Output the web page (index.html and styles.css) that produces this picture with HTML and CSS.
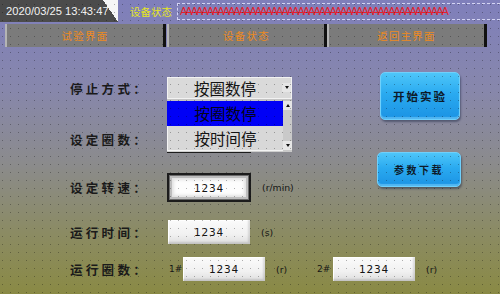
FILE: index.html
```html
<!DOCTYPE html>
<html lang="zh">
<head>
<meta charset="utf-8">
<title>试验界面</title>
<link rel="stylesheet" href="styles.css">
</head>
<body>
<div class="screen">
  <header class="topbar">
    <div class="clock">2020/03/25 13:43:47</div>
    <div class="status">设备状态</div>
    <div class="marquee"><span class="marquee-text">AAAAAAAAAAAAAAAAAAAAAAAAAAAAAAAAAAAAAAAAAAAAAAAAAA</span></div>
  </header>
  <nav class="tabs">
    <div class="tab tab-1">试验界面</div>
    <div class="tab tab-2">设备状态</div>
    <div class="tab tab-3">返回主界面</div>
  </nav>
  <main class="panel">
    <div class="upper">
      <div class="form">
        <div class="row row-1">
          <span class="label">停止方式：</span>
          <div class="select">
            <span class="select-value">按圈数停</span>
            <span class="arrow-btn"><span class="tri-down"></span></span>
            <div class="list">
              <div class="list-items">
                <div class="item item-active">按圈数停</div>
                <div class="item">按时间停</div>
              </div>
              <div class="scrollbar">
                <span class="arrow-btn"><span class="tri-up"></span></span>
                <span class="track"></span>
                <span class="arrow-btn"><span class="tri-down"></span></span>
              </div>
            </div>
          </div>
        </div>
        <div class="row row-2">
          <span class="label">设定圈数：</span>
          <div class="field field-dark field-laps"></div>
        </div>
        <div class="row row-3">
          <span class="label">设定转速：</span>
          <div class="field field-dark field-speed">1234</div>
          <span class="unit">(r/min)</span>
        </div>
        <div class="row row-4">
          <span class="label">运行时间：</span>
          <div class="field field-light field-time">1234</div>
          <span class="unit">(s)</span>
        </div>
      </div>
      <div class="actions">
        <button class="btn btn-start">开始实验</button>
        <button class="btn btn-load">参数下载</button>
      </div>
    </div>
    <div class="row row-5">
      <span class="label">运行圈数：</span>
      <span class="tag tag-1">1#</span>
      <div class="field field-light">1234</div>
      <span class="unit">(r)</span>
      <span class="tag tag-2">2#</span>
      <div class="field field-light">1234</div>
      <span class="unit">(r)</span>
    </div>
  </main>
  <svg class="grid" width="500" height="294" aria-hidden="true">
    <defs>
      <pattern id="dots" x="2" y="4" width="8" height="8" patternUnits="userSpaceOnUse">
        <rect x="0" y="0" width="1" height="1" fill="#000" fill-opacity="0.3"/>
      </pattern>
    </defs>
    <rect width="500" height="294" fill="url(#dots)"/>
  </svg>
</div>
</body>
</html>
```

FILE: styles.css
```css
* { box-sizing: border-box; }

html, body {
  margin: 0;
  padding: 0;
}

body {
  width: 500px;
  height: 294px;
  overflow: hidden;
  font-family: "Noto Sans CJK SC", "Noto Sans", sans-serif;
}

.screen {
  position: relative;
  width: 500px;
  height: 294px;
  overflow: hidden;
  background: linear-gradient(to bottom, #7f7fbb 0%, #8787ac 30%, #8b8b8d 55%, #8b8b62 80%, #8a8a45 100%);
}

/* top bar */
.topbar {
  display: flex;
  align-items: center;
  height: 22px;
}

.clock {
  width: 118px;
  height: 22px;
  flex: none;
  padding-left: 6px;
  line-height: 22px;
  font-family: "Liberation Sans", Arial, sans-serif;
  font-size: 11.2px;
  color: #f2f2f2;
  white-space: nowrap;
  background:
    linear-gradient(to top right, #4b4b4b 50%, #f6f6f6 50%) right top / 15px 100% no-repeat,
    #4b4b4b;
}

.status {
  margin-left: 12px;
  font-size: 10.5px;
  color: #e6e61e;
  white-space: nowrap;
}

.marquee {
  flex: 1;
  height: 17px;
  margin-left: 5px;
  margin-top: 1px;
  padding-left: 2px;
  border-top: 1px dashed #d4d4f4;
  border-bottom: 1px dashed #d4d4f4;
  border-left: 1px dashed #d4d4f4;
  overflow: hidden;
  display: flex;
  align-items: center;
}

.marquee-text {
  font-family: "Liberation Sans", Arial, sans-serif;
  font-size: 11px;
  letter-spacing: -2px;
  color: #e4202c;
  white-space: nowrap;
  line-height: 1;
}

/* tabs */
.tabs {
  display: flex;
  margin-top: 2px;
  padding-left: 5px;
  height: 23px;
}

.tab {
  height: 23px;
  background: #7b7b7b;
  border-left: 2px solid #b4b4b4;
  border-right: 3px solid #111;
  color: #ee8a1e;
  font-size: 10.5px;
  letter-spacing: 1.2px;
  display: flex;
  align-items: center;
  justify-content: center;
}

.tab-1 { width: 161px; margin-right: 1px; }
.tab-2 { width: 160px; }
.tab-3 { width: 160px; }

/* main panel */
.panel {
  display: flex;
  flex-direction: column;
}

.upper {
  display: flex;
}

.form {
  width: 377px;
  flex: none;
  padding-left: 70px;
  padding-top: 30px;
  display: flex;
  flex-direction: column;
}

.row {
  display: flex;
  align-items: center;
}

.row-1 { height: 22px; position: relative; z-index: 2; }
.row-2 { height: 29px; margin-top: 26px; }
.row-3 { height: 29px; margin-top: 19px; }
.row-4 { height: 24px; margin-top: 18px; }
.row-5 { height: 24px; margin-top: 13px; padding-left: 70px; }

.label {
  width: 97px;
  flex: none;
  font-size: 12.5px;
  font-weight: 700;
  letter-spacing: 3.3px;
  color: #1a1a1a;
  white-space: nowrap;
}

/* dropdown */
.select {
  position: relative;
  width: 125px;
  height: 22px;
  display: flex;
  background: #dadada;
  border: 1px solid #f2f2f2;
}

.select-value {
  flex: 1;
  text-align: center;
  font-size: 15.5px;
  line-height: 20px;
  color: #141414;
}

.arrow-btn {
  width: 9px;
  height: 9px;
  flex: none;
  background: #e6e6e6;
  display: flex;
  align-items: center;
  justify-content: center;
}

.select > .arrow-btn {
  margin-top: 5px;
}

.tri-down, .tri-up {
  width: 0;
  height: 0;
  border-left: 2.5px solid transparent;
  border-right: 2.5px solid transparent;
}

.tri-down { border-top: 3px solid #111; }
.tri-up { border-bottom: 3px solid #111; }

.list {
  position: absolute;
  left: -1px;
  top: 21px;
  width: 125px;
  height: 53px;
  display: flex;
  background: #cfcfcf;
  border-top: 2px solid #c4c4c4;
}

.list-items {
  flex: 1;
  display: flex;
  flex-direction: column;
}

.item {
  height: 25px;
  text-align: center;
  font-size: 15.5px;
  line-height: 24px;
  color: #141414;
  background: #d8d8d8;
  border-left: 1px solid #f4f4f4;
  border-bottom: 1px solid #f4f4f4;
}

.item-active {
  background: #0000f6;
  border-color: #0000f6;
  color: #050518;
}

.scrollbar {
  width: 9px;
  flex: none;
  display: flex;
  flex-direction: column;
  background: #c9c9c9;
  padding-bottom: 2px;
}

.track { flex: 1; }

/* fields */
.field {
  flex: none;
  display: flex;
  align-items: center;
  justify-content: center;
  font-family: "DejaVu Sans", sans-serif;
  font-size: 10.5px;
  letter-spacing: 0.8px;
  color: #141414;
}

.field-dark {
  width: 84px;
  height: 29px;
  border: 2px solid #1c1c1c;
  background: #fdfdfd;
  box-shadow:
    inset 0 0 0 1px #6a6a6a,
    inset 0 0 0 3px #bdbdbd,
    inset 0 0 3px 5px #e2e2e2;
}

.field-laps {
  margin-top: -2px;
}

.field-light {
  width: 82px;
  height: 24px;
  background: linear-gradient(to bottom, #fbfbfb 0%, #f1f1f1 60%, #dedede 100%);
  box-shadow: inset -2px -2px 2px rgba(0, 0, 0, 0.12), inset 1px 1px 0 #ffffff;
}

.field-time { margin-left: 1px; }

.unit {
  flex: none;
  font-family: "DejaVu Sans", sans-serif;
  font-size: 9.3px;
  color: #161616;
  margin-left: 11px;
}

.tag {
  flex: none;
  font-family: "DejaVu Sans", sans-serif;
  font-size: 9px;
  color: #161616;
}

.tag-1 { margin-left: 2px; width: 14px; }
.tag-2 { margin-left: 30px; width: 16px; }

/* action buttons */
.actions {
  display: flex;
  flex-direction: column;
  align-items: flex-start;
  padding-top: 25px;
}

.btn {
  margin: 0;
  padding: 0;
  border: 1px solid #6fd0fb;
  border-radius: 5px;
  background: linear-gradient(to bottom, #4ec6f9 0%, #2aaaf0 45%, #1b93e4 100%);
  box-shadow: 1px 2px 2px rgba(20, 30, 60, 0.45), inset 0 -2px 1px rgba(140, 220, 255, 0.5);
  font-family: "Noto Sans CJK SC", sans-serif;
  font-weight: 700;
  color: #0d1a2a;
  display: flex;
  align-items: center;
  justify-content: center;
}

.btn-start {
  width: 80px;
  height: 48px;
  margin-left: 3px;
  font-size: 11.5px;
  letter-spacing: 2px;
}

.btn-load {
  width: 84px;
  height: 35px;
  margin-top: 32px;
  font-size: 10px;
  letter-spacing: 2.5px;
}

/* design grid overlay */
.grid {
  position: absolute;
  left: 0;
  top: 0;
  pointer-events: none;
  z-index: 5;
}
```
